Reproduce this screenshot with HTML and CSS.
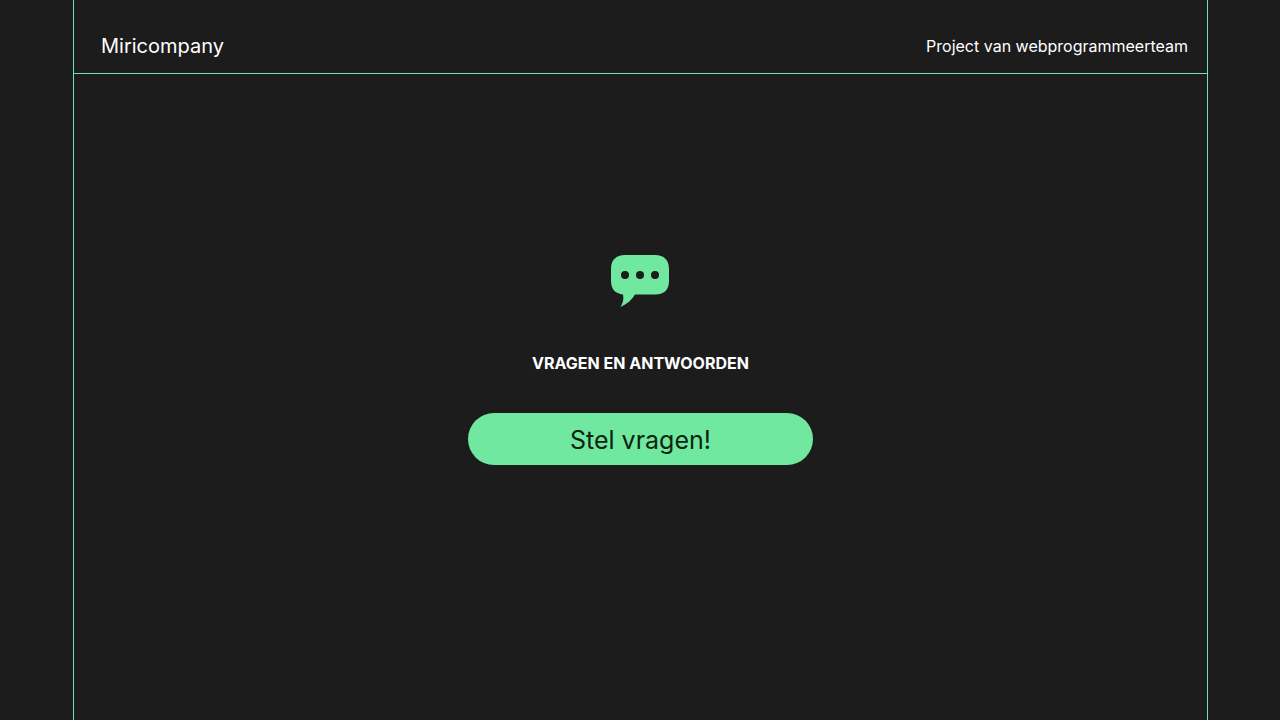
FILE: index.html
```html
<!DOCTYPE html>
<html lang="nl">
<head>
    <meta charset="UTF-8">
    <meta name="viewport" content="width=device-width, initial-scale=1.0">
    <title>Miricompany</title>
    <link rel="stylesheet" href="styles.css">
</head>
<body>
    <div class="container">
        <header class="header">
            <span class="brand">Miricompany</span>
            <span class="project">Project van webprogrammeerteam</span>
        </header>
        <main class="content">
            <svg class="chat-icon" viewBox="0 0 59 52" aria-hidden="true">
                <path class="bubble" d="M14 0H44C53 0 58 5 58 14V26C58 35 53 39.500 44 39.500H24C21 45 16 49 9.500 52C12 48 13 44 12 39.500C4 38.500 0 34 0 26V14C0 5 5 0 14 0Z"/>
                <circle cx="14" cy="20" r="4"/>
                <circle cx="29" cy="20" r="4"/>
                <circle cx="44" cy="20" r="4"/>
            </svg>
            <h1 class="title">VRAGEN EN ANTWOORDEN</h1>
            <button class="ask-button" type="button">Stel vragen!</button>
        </main>
    </div>
</body>
</html>
```
FILE: styles.css
```css
:root {
    --bg: #1c1c1c;
    --text: #fff;
    --accent: #70e8a0;
    --line: #76e0ac;
}
* {
    box-sizing: border-box;
}
body {
    margin: 0;
    font-family: Inter, sans-serif;
    background: var(--bg);
    color: var(--text);
}
.container {
    display: flex;
    flex-direction: column;
    min-height: 100vh;
    margin: 0 72px 0 73px;
    border-left: 1px solid var(--line);
    border-right: 1px solid var(--line);
}
.header {
    display: flex;
    justify-content: space-between;
    align-items: center;
    height: 74px;
    padding: 18px 19px 0 27px;
    border-bottom: 1px solid var(--line);
    line-height: 24px;
}
.brand {
    font-size: 20px;
}
.project {
    font-size: 16px;
}
.content {
    flex: 1;
    display: flex;
    flex-direction: column;
    justify-content: center;
    align-items: center;
    padding-bottom: 74px;
}
.chat-icon {
    width: 59px;
    height: 52px;
    fill: var(--bg);
}
.bubble {
    fill: var(--accent);
}
.title {
    margin: 46px 0 40px;
    font-size: 16px;
    line-height: 20px;
    font-weight: 700;
}
.ask-button {
    width: 345px;
    max-width: 100%;
    height: 52px;
    padding: 2px 20px 0;
    border: none;
    border-radius: 26px;
    background: var(--accent);
    color: #0c2410;
    font-family: inherit;
    font-size: 25px;
    cursor: pointer;
}
```
